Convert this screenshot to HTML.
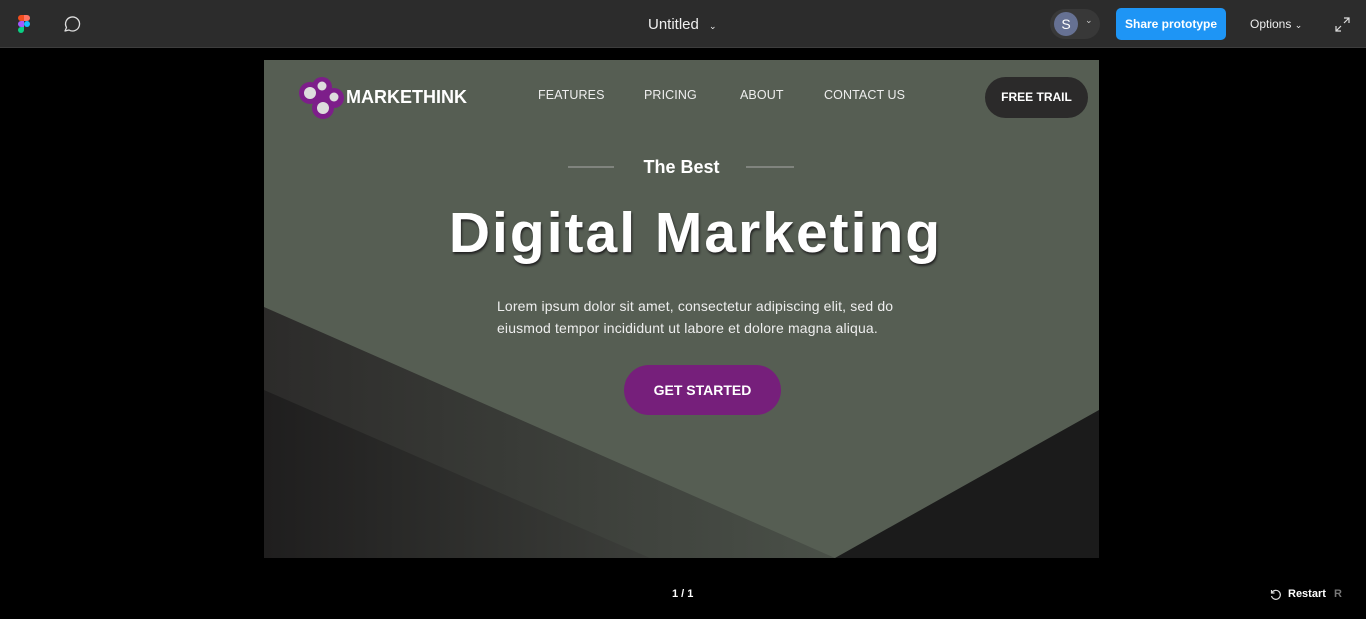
<!DOCTYPE html>
<html><head><meta charset="utf-8"><style>
*{margin:0;padding:0;box-sizing:border-box}
body{width:1366px;height:619px;background:#000;font-family:"Liberation Sans",sans-serif;position:relative;overflow:hidden;color:#fff}
.top{position:absolute;left:0;top:0;width:1366px;height:48px;background:#2c2c2c;border-bottom:1px solid #3d3d3d}
.abs{position:absolute}
.frame{position:absolute;left:264px;top:60px;width:835px;height:498px;background:#565e53;overflow:hidden}
.nav{position:absolute;top:28px;font-size:12.5px;color:#eee;letter-spacing:.1px}
</style></head><body>
<div class="top">
  <svg class="abs" style="left:17px;top:15px" width="14" height="19" viewBox="0 0 14 19">
    <path d="M4 0h3v6H4a3 3 0 0 1 0-6z" fill="#f24e1e"/><path d="M7 0h3a3 3 0 0 1 0 6H7z" fill="#ff7262"/>
    <path d="M4 6h3v6H4a3 3 0 0 1 0-6z" fill="#a259ff"/><circle cx="10" cy="9" r="3" fill="#1abcfe"/>
    <path d="M4 12h3v3a3 3 0 1 1-3-3z" fill="#0acf83"/></svg>
  <svg class="abs" style="left:62px;top:15px" width="19" height="18" viewBox="0 0 19 18"><path d="M3 16l1.5-3.5A7 7 0 1 1 7 15z" fill="none" stroke="#ddd" stroke-width="1.3" stroke-linejoin="round"/></svg>
  <div class="abs" style="left:648px;top:16px;font-size:15px;color:#eee">Untitled <span style="font-size:9px;margin-left:6px">⌄</span></div>
  <div class="abs" style="left:1050px;top:9px;width:50px;height:30px;border-radius:15px;background:#383838"></div>
  <div class="abs" style="left:1054px;top:12px;width:24px;height:24px;border-radius:12px;background:#667193;font-size:14px;text-align:center;line-height:24px">S</div>
  <div class="abs" style="left:1085px;top:15px;font-size:9px;color:#ccc">⌄</div>
  <div class="abs" style="left:1116px;top:8px;width:110px;height:32px;border-radius:5px;background:#1e95f5;font-size:12px;font-weight:bold;text-align:center;line-height:32px">Share prototype</div>
  <div class="abs" style="left:1250px;top:17px;font-size:12px;color:#eee">Options <span style="font-size:9px">⌄</span></div>
  <svg class="abs" style="left:1335px;top:17px" width="15" height="15" viewBox="0 0 15 15" fill="none" stroke="#ddd" stroke-width="1.2"><path d="M9 1h5v5M14 1L9 6M6 14H1V9M1 14l5-5"/></svg>
</div>

<div class="frame">
  <svg class="abs" style="left:0;top:0" width="835" height="498">
    <defs><linearGradient id="g1" x1="0" y1="0" x2="1" y2="0"><stop offset="0" stop-color="#2c2b2a"/><stop offset="1" stop-color="#4a5048"/></linearGradient>
    <linearGradient id="g2" x1="0" y1="0" x2="1" y2="0"><stop offset="0" stop-color="#1f1e1e"/><stop offset="1" stop-color="#3c3e3a"/></linearGradient></defs>
    <polygon points="0,247 571,498 0,498" fill="url(#g1)"/>
    <polygon points="0,330 386,498 0,498" fill="url(#g2)"/>
    <polygon points="835,350 835,498 571,498" fill="#1b1b1b"/>
    <g>
      <circle cx="46" cy="33" r="11" fill="#7d1e8a"/><circle cx="58" cy="27" r="10" fill="#7d1e8a"/>
      <circle cx="70" cy="38" r="10" fill="#7d1e8a"/><circle cx="59" cy="48" r="11" fill="#7d1e8a"/>
      <circle cx="56" cy="38" r="9" fill="#7d1e8a"/>
      <circle cx="46" cy="33" r="6" fill="#ddd"/><circle cx="58" cy="26" r="4.5" fill="#ddd"/>
      <circle cx="70" cy="37" r="4.5" fill="#ddd"/><circle cx="59" cy="48" r="6" fill="#ddd"/>
    </g>
    <line x1="304" y1="107" x2="350" y2="107" stroke="#aaa" stroke-width="1"/>
    <line x1="482" y1="107" x2="530" y2="107" stroke="#aaa" stroke-width="1"/>
  </svg>
  <div class="abs" style="left:82px;top:27px;font-size:18px;font-weight:bold">MARKETHINK</div>
  <div class="nav" style="left:274px">FEATURES</div>
  <div class="nav" style="left:380px">PRICING</div>
  <div class="nav" style="left:476px">ABOUT</div>
  <div class="nav" style="left:560px">CONTACT US</div>
  <div class="abs" style="left:721px;top:17px;width:103px;height:41px;border-radius:21px;background:#2b2a2a;font-size:12px;font-weight:bold;text-align:center;line-height:41px">FREE TRAIL</div>
  <div class="abs" style="left:0;width:835px;top:97px;text-align:center;font-size:18px;font-weight:bold">The Best</div>
  <div class="abs" style="left:14px;width:835px;top:140px;text-align:center;font-size:57px;font-weight:bold;letter-spacing:2px;text-shadow:1px 2px 2px #222">Digital Marketing</div>
  <div class="abs" style="left:233px;top:235px;font-size:14px;line-height:22px;color:#eee;letter-spacing:.15px">Lorem ipsum dolor sit amet, consectetur adipiscing elit, sed do<br>eiusmod tempor incididunt ut labore et dolore magna aliqua.</div>
  <div class="abs" style="left:360px;top:305px;width:157px;height:50px;border-radius:25px;background:#761f7b;font-size:14px;font-weight:bold;text-align:center;line-height:50px">GET STARTED</div>
</div>

<div class="abs" style="left:672px;top:588px;font-size:11px;font-weight:bold">1 / 1</div>
<svg class="abs" style="left:1270px;top:589px" width="12" height="12" viewBox="0 0 12 12" fill="none" stroke="#ddd" stroke-width="1.2"><path d="M2 3.5A4.5 4.5 0 1 1 1.5 7"/><path d="M1.5 1v3h3"/></svg>
<div class="abs" style="left:1288px;top:588px;font-size:11px;font-weight:bold">Restart <span style="color:#777;margin-left:5px">R</span></div>
</body></html>
